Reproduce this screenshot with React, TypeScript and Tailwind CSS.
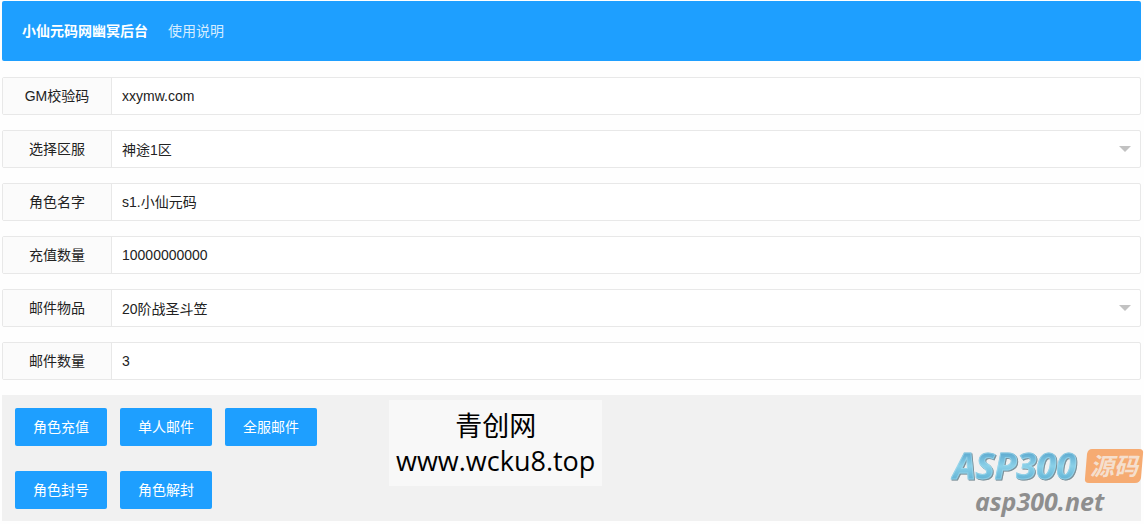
import { useState } from 'react';

interface Field {
  id: string;
  label: string;
  value: string;
  options?: string[];
}

const fields: Field[] = [
  { id: 'checknum', label: 'GM校验码', value: 'xxymw.com' },
  { id: 'server', label: '选择区服', value: '神途1区', options: ['神途1区'] },
  { id: 'role', label: '角色名字', value: 's1.小仙元码' },
  { id: 'charge', label: '充值数量', value: '10000000000' },
  { id: 'item', label: '邮件物品', value: '20阶战圣斗笠', options: ['20阶战圣斗笠'] },
  { id: 'count', label: '邮件数量', value: '3' },
];

const buttonRows = [
  ['角色充值', '单人邮件', '全服邮件'],
  ['角色封号', '角色解封'],
];

function FieldRow({ field }: { field: Field }) {
  const [value, setValue] = useState(field.value);

  return (
    <div className="flex h-[38px] rounded-xs border border-[#e8e8e8] bg-white">
      <label
        htmlFor={field.id}
        className="flex w-[109px] shrink-0 items-center justify-center border-r border-[#e8e8e8] bg-[#fbfbfb]"
      >
        {field.label}
      </label>
      {field.options ? (
        <div className="relative flex-1">
          <select
            id={field.id}
            value={value}
            onChange={(e) => setValue(e.target.value)}
            className="h-full w-full appearance-none bg-transparent px-2.5 pt-0.5 outline-none"
          >
            {field.options.map((option) => (
              <option key={option} value={option}>
                {option}
              </option>
            ))}
          </select>
          <span className="pointer-events-none absolute top-[15px] right-[9px] border-x-6 border-t-6 border-x-transparent border-t-[#c2c2c2]" />
        </div>
      ) : (
        <input
          id={field.id}
          type="text"
          value={value}
          onChange={(e) => setValue(e.target.value)}
          className="min-w-0 flex-1 bg-transparent px-2.5 outline-none"
        />
      )}
    </div>
  );
}

function SiteLogo() {
  return (
    <div className="pointer-events-none absolute right-[-3px] bottom-[3px] flex flex-col font-['Open_Sans','Noto_Sans_CJK_SC',sans-serif] font-bold italic">
      <div className="flex items-center">
        <span className="bg-linear-to-b from-[#4d9cc6] via-[#8ad0e8] to-[#55abd0] bg-clip-text pr-2 pl-0.5 text-[36px] leading-[36px] text-transparent drop-shadow-[1px_1px_0_#7b9099] [-webkit-text-stroke:1px_#a5dcee99]">
          ASP300
        </span>
        <span className="relative flex h-9 w-[60px] items-center justify-center">
          <svg className="absolute inset-0" width="60" height="36" viewBox="0 0 60 36" aria-hidden="true">
            <path d="M8 1H55Q60 1 59 6L57 30Q56 35 51 35H5Q0 35 1 30L3 6Q4 1 8 1Z" fill="#f6ab72" />
          </svg>
          <span className="relative text-[24px] leading-[36px] text-[#f5dfcd]">源码</span>
        </span>
      </div>
      <span className="ml-6 text-[25px] leading-[34px] text-[#8e8e8e]">asp300.net</span>
    </div>
  );
}

export default function App() {
  return (
    <div className="bg-[#fefefe] pt-px pr-[3px] pb-[3px] pl-0.5 font-['Liberation_Sans','Noto_Sans_CJK_SC',sans-serif] text-[14px] text-[#222]">
      <nav className="flex h-[60px] items-center gap-5 rounded-xs bg-[#1e9fff] px-5 text-white">
        <a href="#home" className="font-bold">
          小仙元码网幽冥后台
        </a>
        <a href="#help" className="text-[#d6edff]">
          使用说明
        </a>
      </nav>

      <form className="mt-4 flex flex-col gap-[15px]" onSubmit={(e) => e.preventDefault()}>
        {fields.map((field) => (
          <FieldRow key={field.id} field={field} />
        ))}

        <div className="relative flex flex-col gap-[25px] bg-[#f1f1f1] px-[13px] pt-[13px] pb-3">
          {buttonRows.map((row) => (
            <div key={row[0]} className="flex gap-[13px]">
              {row.map((name) => (
                <button
                  key={name}
                  type="button"
                  className="h-[38px] cursor-pointer rounded-xs bg-[#1e9fff] px-[18px] text-white"
                >
                  {name}
                </button>
              ))}
            </div>
          ))}

          {/* Watermark */}
          <div className="pointer-events-none absolute top-[5px] left-[387px] bg-[#f8f8f8] px-[7px] py-2 text-center font-['Open_Sans','Noto_Sans_CJK_SC',sans-serif] text-[27px] leading-[35px] text-black">
            <p>青创网</p>
            <p>www.wcku8.top</p>
          </div>
          <SiteLogo />
        </div>
      </form>
    </div>
  );
}
